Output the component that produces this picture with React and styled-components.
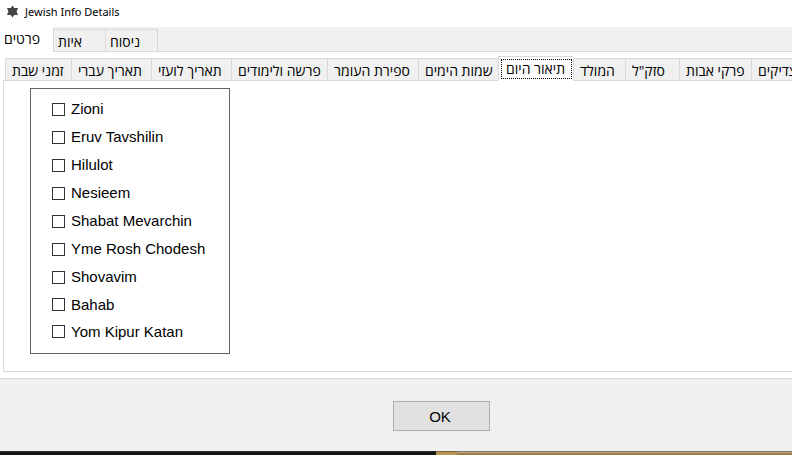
import { useState } from 'react';
import styled, { createGlobalStyle } from 'styled-components';

const GlobalStyle = createGlobalStyle`
  *, *::before, *::after {
    box-sizing: border-box;
  }

  body {
    margin: 0;
    background: #ffffff;
    color: #000000;
    font-family: 'Liberation Sans', Arial, sans-serif;
  }
`;

const Window = styled.div`
  display: flex;
  flex-direction: column;
  min-height: 100vh;
  overflow: hidden;
`;

const TitleBar = styled.header`
  display: flex;
  align-items: center;
  gap: 6px;
  height: 27px;
  padding: 0 6px 4px;
`;

const Title = styled.h1`
  margin: 0;
  font-family: 'Noto Sans', 'Open Sans', sans-serif;
  font-size: 11px;
  font-weight: 400;
  line-height: 16px;
`;

const TabStrip = styled.div`
  display: flex;
  align-items: flex-end;
  height: 25px;
  background: linear-gradient(#d9d9d9, #d9d9d9) bottom / 100% 1px no-repeat
    ${props => (props.$inner ? '#ffffff' : '#f0f0f0')};
  padding-left: ${props => (props.$inner ? '2px' : '0')};
`;

const Tab = styled.button`
  flex: none;
  width: ${props => props.$width}px;
  height: 23px;
  padding: 2px 0 0 6px;
  border: 1px solid #d9d9d9;
  border-right-width: 0;
  background: #f0f0f0;
  color: #000000;
  font-family: 'Open Sans', 'Liberation Sans', sans-serif;
  font-size: 14px;
  line-height: 18px;
  text-align: left;
  white-space: nowrap;
  outline: none;

  &:last-child {
    border-right-width: 1px;
  }

  &[aria-selected='true'] {
    height: 25px;
    border-bottom-color: #ffffff;
    background: #ffffff;
  }
`;

const OuterTab = styled(Tab)`
  padding-left: 4px;

  &[aria-selected='true'] {
    border-color: #ffffff;
    padding: 0 0 2px 3px;
  }
`;

const InnerTab = styled(Tab)`
  &[aria-selected='true'] {
    padding: 2px 1px 1px 2px;
  }
`;

const FocusFrame = styled.span`
  display: block;
  height: 20px;
  padding-left: 4px;
  border: 1px dotted #000000;
`;

const Page = styled.section`
  flex: 1;
  display: flex;
  flex-direction: column;
  padding: 4px 0 6px 3px;
`;

const Panel = styled.div`
  flex: 1;
  padding: 7px 26px 16px;
  border-left: 1px solid #d9d9d9;
  border-bottom: 1px solid #d9d9d9;
`;

const OptionBox = styled.fieldset`
  width: 200px;
  margin: 0;
  padding: 6px 21px 8px;
  border: 1px solid #646464;
`;

const Option = styled.label`
  display: flex;
  align-items: center;
  gap: 6px;
  height: 28px;
  font-size: 15px;
  line-height: 18px;
  white-space: nowrap;

  &:nth-of-type(n + 8) {
    height: 27px;
  }
`;

const CheckBox = styled.input`
  appearance: none;
  flex: none;
  width: 13px;
  height: 13px;
  margin: 0;
  border: 1px solid #333333;
  background: #ffffff;

  &:checked {
    background: #333333;
    box-shadow: inset 0 0 0 2px #ffffff;
  }
`;

const Footer = styled.footer`
  display: flex;
  justify-content: center;
  height: 73px;
  padding: 22px 0 0 90px;
  border-top: 1px solid #d9d9d9;
  background: #f0f0f0;
`;

const OkButton = styled.button`
  width: 97px;
  height: 30px;
  padding: 0 2px 0 0;
  border: 1px solid #adadad;
  background: #e1e1e1;
  color: #000000;
  font-family: inherit;
  font-size: 15px;
`;

const Backdrop = styled.div`
  display: flex;
  height: 4px;
`;

const Edge = styled.div`
  flex: ${props => props.$share};
  border-top: 1px solid ${props => props.$line};
  background: ${props => props.$fill};
`;

const mainTabs = [
  { name: 'פרטים', width: 53 },
  { name: 'איות', width: 52 },
  { name: 'ניסוח', width: 53 },
];

const detailTabs = [
  { name: 'זמני שבת', width: 66 },
  { name: 'תאריך עברי', width: 80 },
  { name: 'תאריך לועזי', width: 80 },
  { name: 'פרשה ולימודים', width: 96 },
  { name: 'ספירת העומר', width: 91 },
  { name: 'שמות הימים', width: 80 },
  { name: 'תיאור היום', width: 75 },
  { name: 'המולד', width: 52 },
  { name: 'סזק"ל', width: 54 },
  { name: 'פרקי אבות', width: 72 },
  { name: 'צדיקים', width: 60 },
];

const options = [
  'Zioni',
  'Eruv Tavshilin',
  'Hilulot',
  'Nesieem',
  'Shabat Mevarchin',
  'Yme Rosh Chodesh',
  'Shovavim',
  'Bahab',
  'Yom Kipur Katan',
];

function StarIcon() {
  return (
    <svg width="13" height="13" viewBox="0 0 13 13" aria-hidden="true">
      <path
        d="M6.5 0.5 L8.2 3 H12 L10.6 6.5 L12 10 H8.2 L6.5 12.5 L4.8 10 H1 L2.4 6.5 L1 3 H4.8 Z"
        fill="#444444"
      />
    </svg>
  );
}

export default function App() {
  const [mainTab, setMainTab] = useState(0);
  const [detailTab, setDetailTab] = useState(6);

  return (
    <Window>
      <GlobalStyle />
      <TitleBar>
        <StarIcon />
        <Title>Jewish Info Details</Title>
      </TitleBar>
      <TabStrip role="tablist">
        {mainTabs.map((tab, i) => (
          <OuterTab
            key={tab.name}
            role="tab"
            aria-selected={i === mainTab}
            $width={tab.width}
            onClick={() => setMainTab(i)}
          >
            {tab.name}
          </OuterTab>
        ))}
      </TabStrip>
      <Page>
        <TabStrip role="tablist" $inner>
          {detailTabs.map((tab, i) => (
            <InnerTab
              key={tab.name}
              role="tab"
              aria-selected={i === detailTab}
              $width={tab.width}
              onClick={() => setDetailTab(i)}
            >
              {i === detailTab ? <FocusFrame>{tab.name}</FocusFrame> : tab.name}
            </InnerTab>
          ))}
        </TabStrip>
        <Panel role="tabpanel">
          <OptionBox>
            {options.map(option => (
              <Option key={option}>
                <CheckBox type="checkbox" />
                {option}
              </Option>
            ))}
          </OptionBox>
        </Panel>
      </Page>
      <Footer>
        <OkButton>OK</OkButton>
      </Footer>
      <Backdrop>
        <Edge $share={436} $line="#2a2a2e" $fill="#151518" />
        <Edge $share={21} $line="#7a6438" $fill="#b8954f" />
        <Edge $share={335} $line="#77777a" $fill="linear-gradient(#b9a67e 1px, #9f7f45 1px)" />
      </Backdrop>
    </Window>
  );
}
